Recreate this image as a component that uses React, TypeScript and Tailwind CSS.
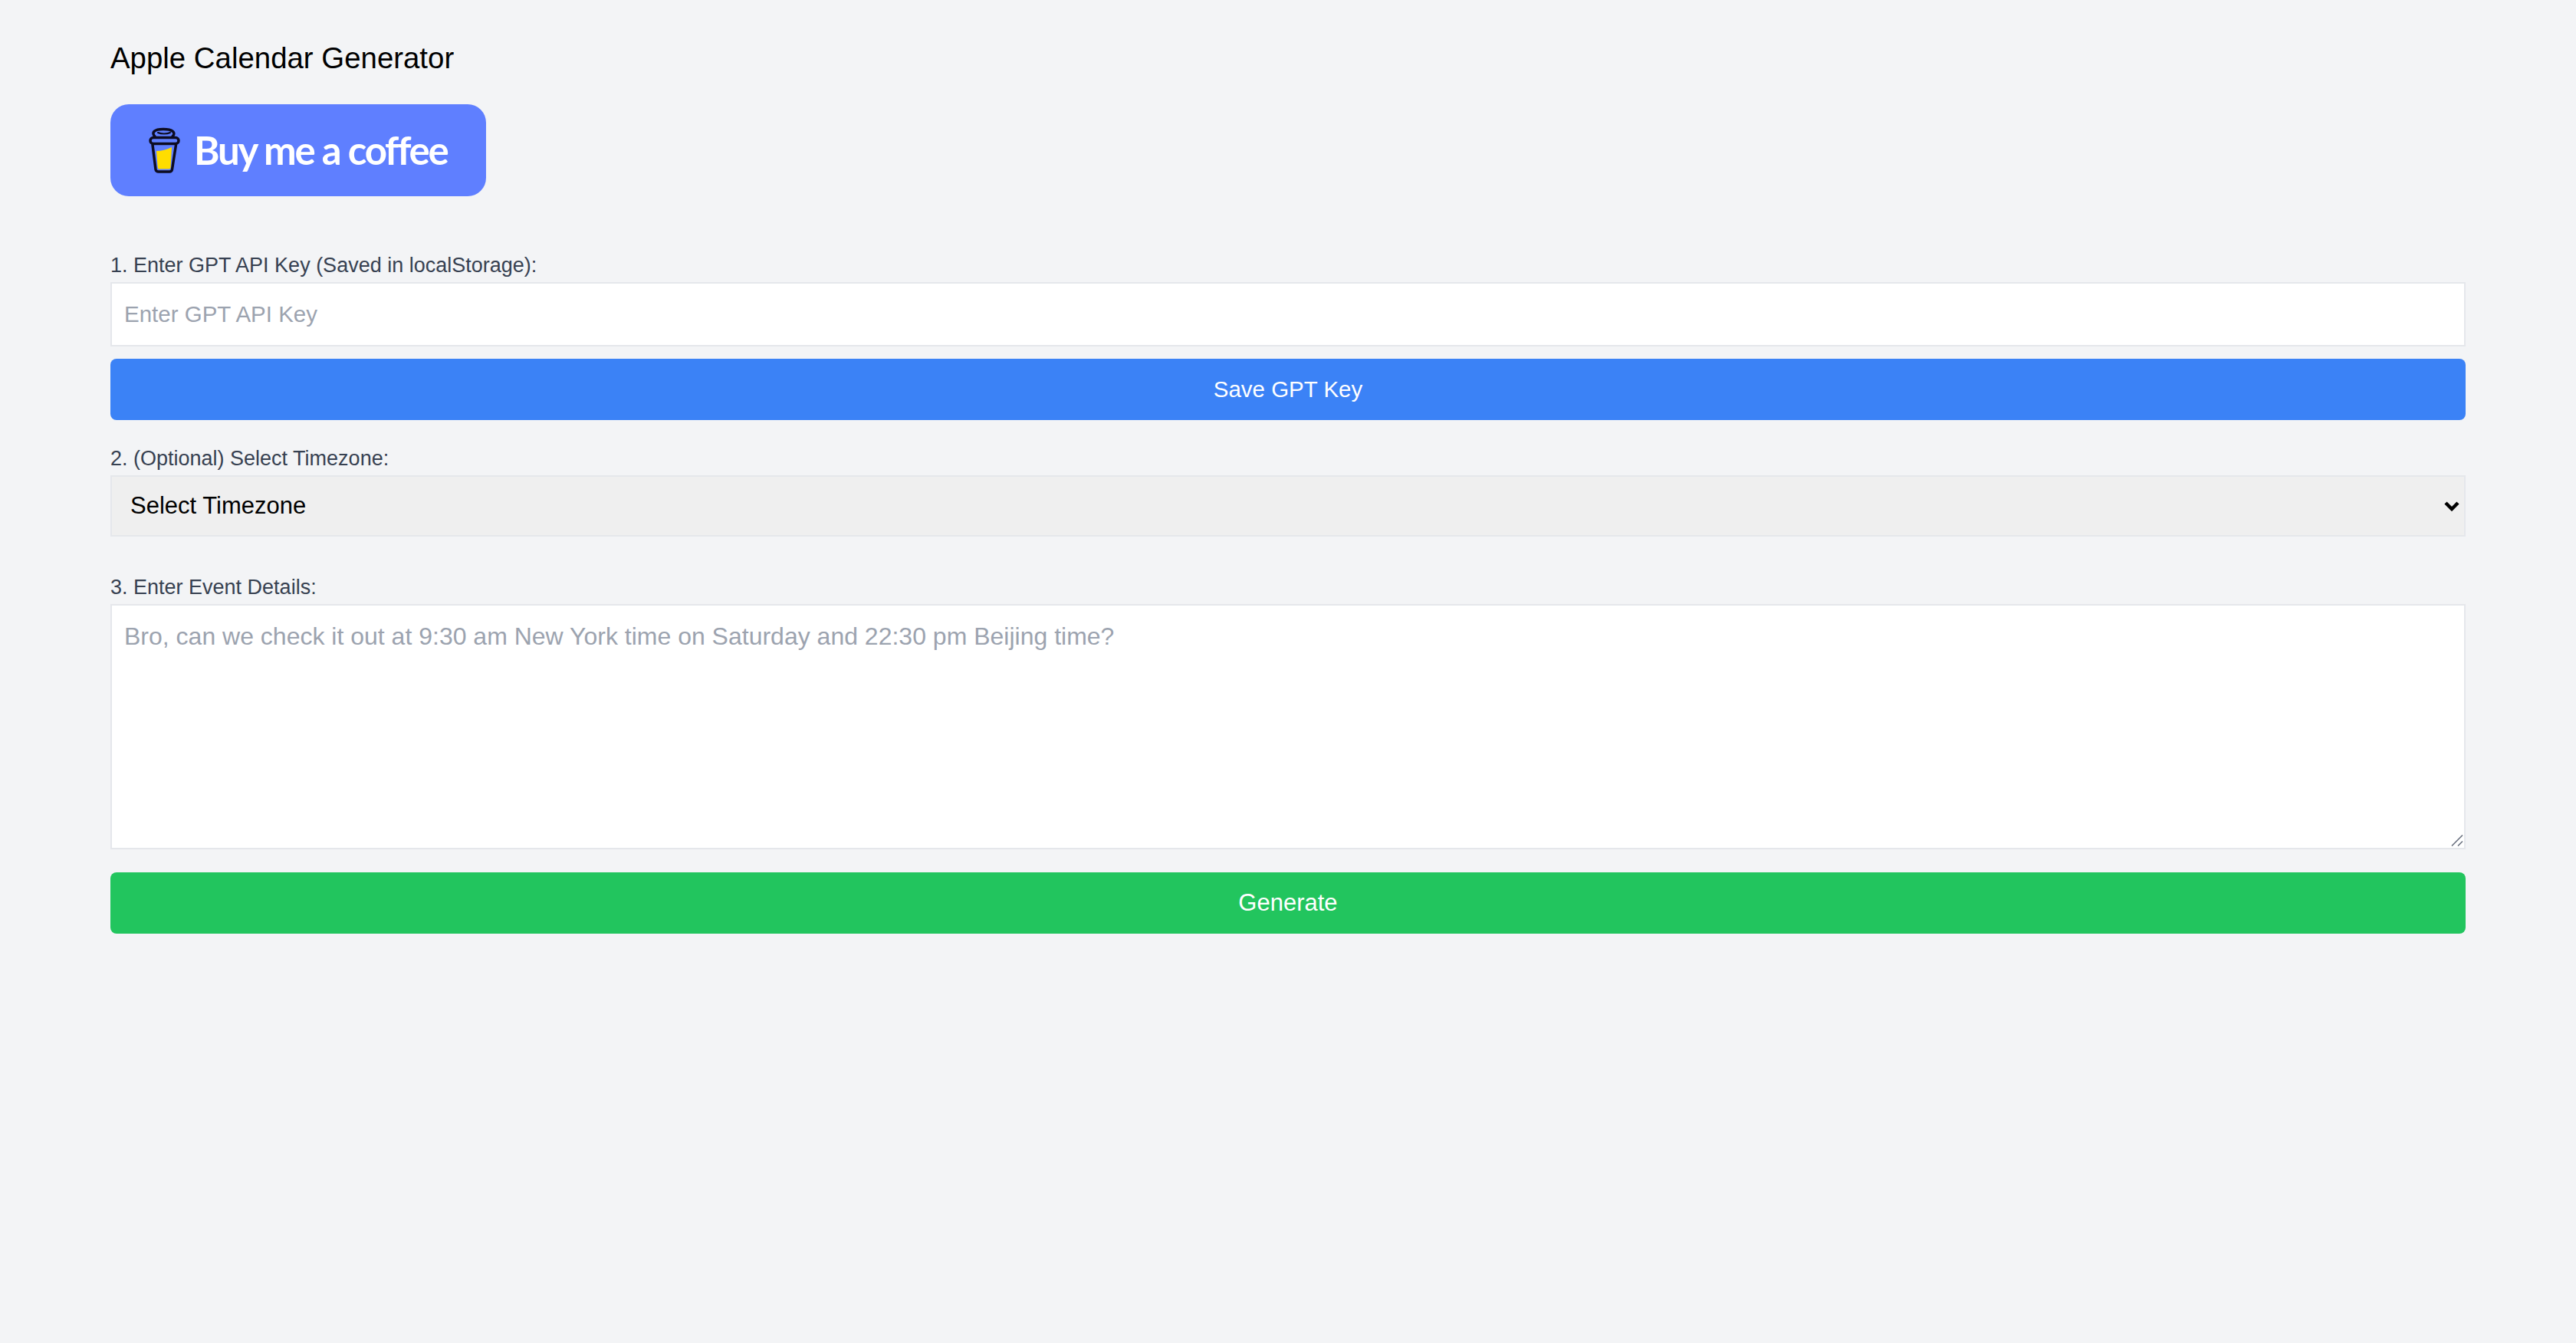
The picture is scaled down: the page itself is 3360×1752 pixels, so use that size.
import React from 'react'

function CoffeeCup() {
  return (
    <svg viewBox="0 0 44 62" className="w-[44px] h-[62px] shrink-0" fill="none" stroke="#0d0c22" strokeWidth="3.5" strokeLinecap="round" strokeLinejoin="round">
      <path d="M12 32 Q22 32 32 27 L30.5 54 Q30 55.5 28 55.5 L16 55.5 Q14 55.5 13.8 54 Z" fill="#ffdd00" stroke="none" />
      <path d="M7 24 L11 56 Q11.5 59 15 59 L29 59 Q32 59 32.5 56 L37.5 24" />
      <rect x="4" y="14.5" width="37" height="8" rx="4" />
      <path d="M10 13 C5 8 9 3.5 21 3.5 C33 3.5 38 8 33 13" />
      <path d="M14 8 C18 10 26 10 30 8" strokeWidth="2" />
    </svg>
  )
}

export default function App() {
  return (
    <div className="min-h-screen bg-[#f3f4f6] font-['Liberation_Sans',sans-serif]">
      <div className="mx-auto w-[3072px] pt-[48px]">
        <h1 className="text-[38.4px] leading-[56px] mb-[32px] text-black">Apple Calendar Generator</h1>
        <a className="flex items-center w-[490px] h-[120px] rounded-[24px] bg-[#5f7fff] pl-[48px] mb-[68px]">
          <CoffeeCup />
          <span className="ml-[17px] font-['Lato',sans-serif] font-bold text-[51px] tracking-[-2.2px] text-white">Buy me a coffee</span>
        </a>
        <label className="block text-[27px] leading-[44px] text-[#374151]">1. Enter GPT API Key (Saved in localStorage):</label>
        <input className="block w-full h-[84px] border-2 border-[#e5e7eb] bg-white px-[16px] text-[29.5px] mb-[16px] placeholder:text-[#9ca3af]" placeholder="Enter GPT API Key" />
        <button className="block w-full h-[80px] rounded-[8px] bg-[#3b82f6] text-white text-[29.5px] mb-[28px]">Save GPT Key</button>
        <label className="block text-[27px] leading-[44px] text-[#374151]">2. (Optional) Select Timezone:</label>
        <div className="relative mb-[44px]">
          <select className="block w-full h-[80px] appearance-none border-2 border-[#e5e7eb] bg-[#efefef] pl-[24px] pr-[48px] text-[31px] text-black">
            <option>Select Timezone</option>
          </select>
          <svg viewBox="0 0 20 14" className="absolute right-[8px] top-[33px] w-[20px] h-[14px] pointer-events-none" fill="none" stroke="#000" strokeWidth="4.5">
            <path d="M2 3 L10 11 L18 3" />
          </svg>
        </div>
        <label className="block text-[27px] leading-[44px] text-[#374151]">3. Enter Event Details:</label>
        <div className="relative mb-[30px]">
          <textarea className="block w-full h-[320px] resize-none border-2 border-[#e5e7eb] bg-white p-[16px] text-[32px] placeholder:text-[#9ca3af]" placeholder="Bro, can we check it out at 9:30 am New York time on Saturday and 22:30 pm Beijing time?" />
          <svg viewBox="0 0 16 15" className="absolute right-[3px] bottom-[4px] w-[16px] h-[15px] pointer-events-none" fill="none" stroke="#6b7280" strokeWidth="1.6">
            <path d="M1 14.5 L15 0.5 M9 14.5 L15 8.5" />
          </svg>
        </div>
        <button className="block w-full h-[80px] rounded-[8px] bg-[#22c55e] text-white text-[31px]">Generate</button>
      </div>
    </div>
  )
}
